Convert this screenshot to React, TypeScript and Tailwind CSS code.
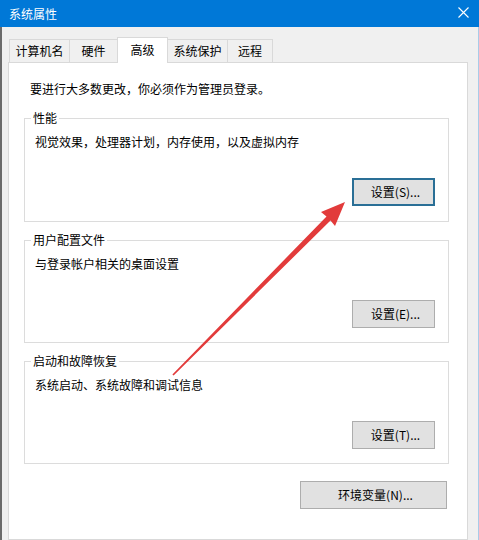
import React from "react";

type Group = {
  title: string;
  desc: string;
  button: string;
  focused?: boolean;
  top: string;
  height: string;
};

const tabs = [
  { label: "计算机名", w: "w-[61px]" },
  { label: "硬件", w: "w-[49px]" },
  { label: "高级", w: "w-[51px]", active: true },
  { label: "系统保护", w: "w-[61px]" },
  { label: "远程", w: "w-[46px]" },
];

const groups: Group[] = [
  {
    title: "性能",
    desc: "视觉效果，处理器计划，内存使用，以及虚拟内存",
    button: "设置(S)...",
    focused: true,
    top: "mt-[21px]",
    height: "h-[104px]",
  },
  {
    title: "用户配置文件",
    desc: "与登录帐户相关的桌面设置",
    button: "设置(E)...",
    top: "mt-[18px]",
    height: "h-[103px]",
  },
  {
    title: "启动和故障恢复",
    desc: "系统启动、系统故障和调试信息",
    button: "设置(T)...",
    top: "mt-[18px]",
    height: "h-[103px]",
  },
];

function Button({ label, focused, className }: { label: string; focused?: boolean; className: string }) {
  return (
    <div
      className={
        focused
          ? `${className} flex items-center justify-center bg-[#e1e1e1] border-2 border-[#2a6f96] leading-[16px] pl-[4px]`
          : `${className} flex items-center justify-center bg-[#e1e1e1] border border-[#adadad] leading-[16px] pl-[4px]`
      }
    >
      {label}
    </div>
  );
}

export default function App() {
  return (
    <div className="relative w-[479px] h-[540px] overflow-hidden flex flex-col text-[12px] text-black font-['Noto_Sans_CJK_SC','Liberation_Sans',sans-serif]">
      {/* title bar */}
      <div className="h-[27px] shrink-0 bg-[#0078d7] flex items-center justify-between pl-[9px] pr-[10px] text-white leading-[16px]">
        <span>系统属性</span>
        <svg width="11" height="11" viewBox="0 0 11 11" className="mt-[-2px]">
          <path d="M0.5 0.5 L10.5 10.5 M10.5 0.5 L0.5 10.5" stroke="#ffffff" strokeWidth="1.1" />
        </svg>
      </div>

      {/* body */}
      <div className="flex-1 flex flex-col bg-[#f0f0f0] border-l-2 border-[#6b6b6b] border-r border-r-[#a9cbe8] pl-[6px] pr-[10px] pt-[10px]">
        <div className="flex items-end h-[25px] pl-px">
          {tabs.map((t) =>
            t.active ? (
              <div
                key={t.label}
                className={`${t.w} h-[26px] -mb-px -ml-px relative z-10 bg-white border border-b-0 border-[#d9d9d9] flex items-center justify-center leading-[16px] pb-[2px]`}
              >
                {t.label}
              </div>
            ) : (
              <div
                key={t.label}
                className={`${t.w} h-[23px] -ml-px first:ml-0 bg-[#f0f0f0] border border-b-0 border-[#d9d9d9] flex items-center justify-center leading-[16px]`}
              >
                {t.label}
              </div>
            )
          )}
        </div>

        <div className="flex-1 bg-white border border-[#d9d9d9]">
          <p className="pl-[21px] pt-[18px] leading-[16px]">要进行大多数更改，你必须作为管理员登录。</p>

          {groups.map((g) => (
            <div key={g.title} className={`${g.top} ${g.height} ml-[15px] w-[425px] border border-[#dcdcdc]`}>
              <div className="-mt-[9px] pl-[6px] flex">
                <span className="bg-white px-[2px] leading-[16px]">{g.title}</span>
              </div>
              <p className="mt-[8px] pl-[10px] leading-[16px]">{g.desc}</p>
              <div className="mt-[28px] flex justify-end pr-[13px]">
                <Button label={g.button} focused={g.focused} className="w-[83px] h-[28px]" />
              </div>
            </div>
          ))}

          <div className="mt-[17px] ml-[15px] w-[425px] flex justify-end pr-[2px]">
            <Button label="环境变量(N)..." className="w-[147px] h-[28px]" />
          </div>
        </div>
      </div>

      {/* red annotation arrow */}
      <svg className="absolute left-0 top-0 pointer-events-none" width="479" height="540" viewBox="0 0 479 540">
        <polygon
          points="345,202 335,226 330.5,220.5 173.6,375.6 172.4,374.4 326.5,216.5 321,212"
          fill="#e23b3b"
        />
      </svg>
    </div>
  );
}
